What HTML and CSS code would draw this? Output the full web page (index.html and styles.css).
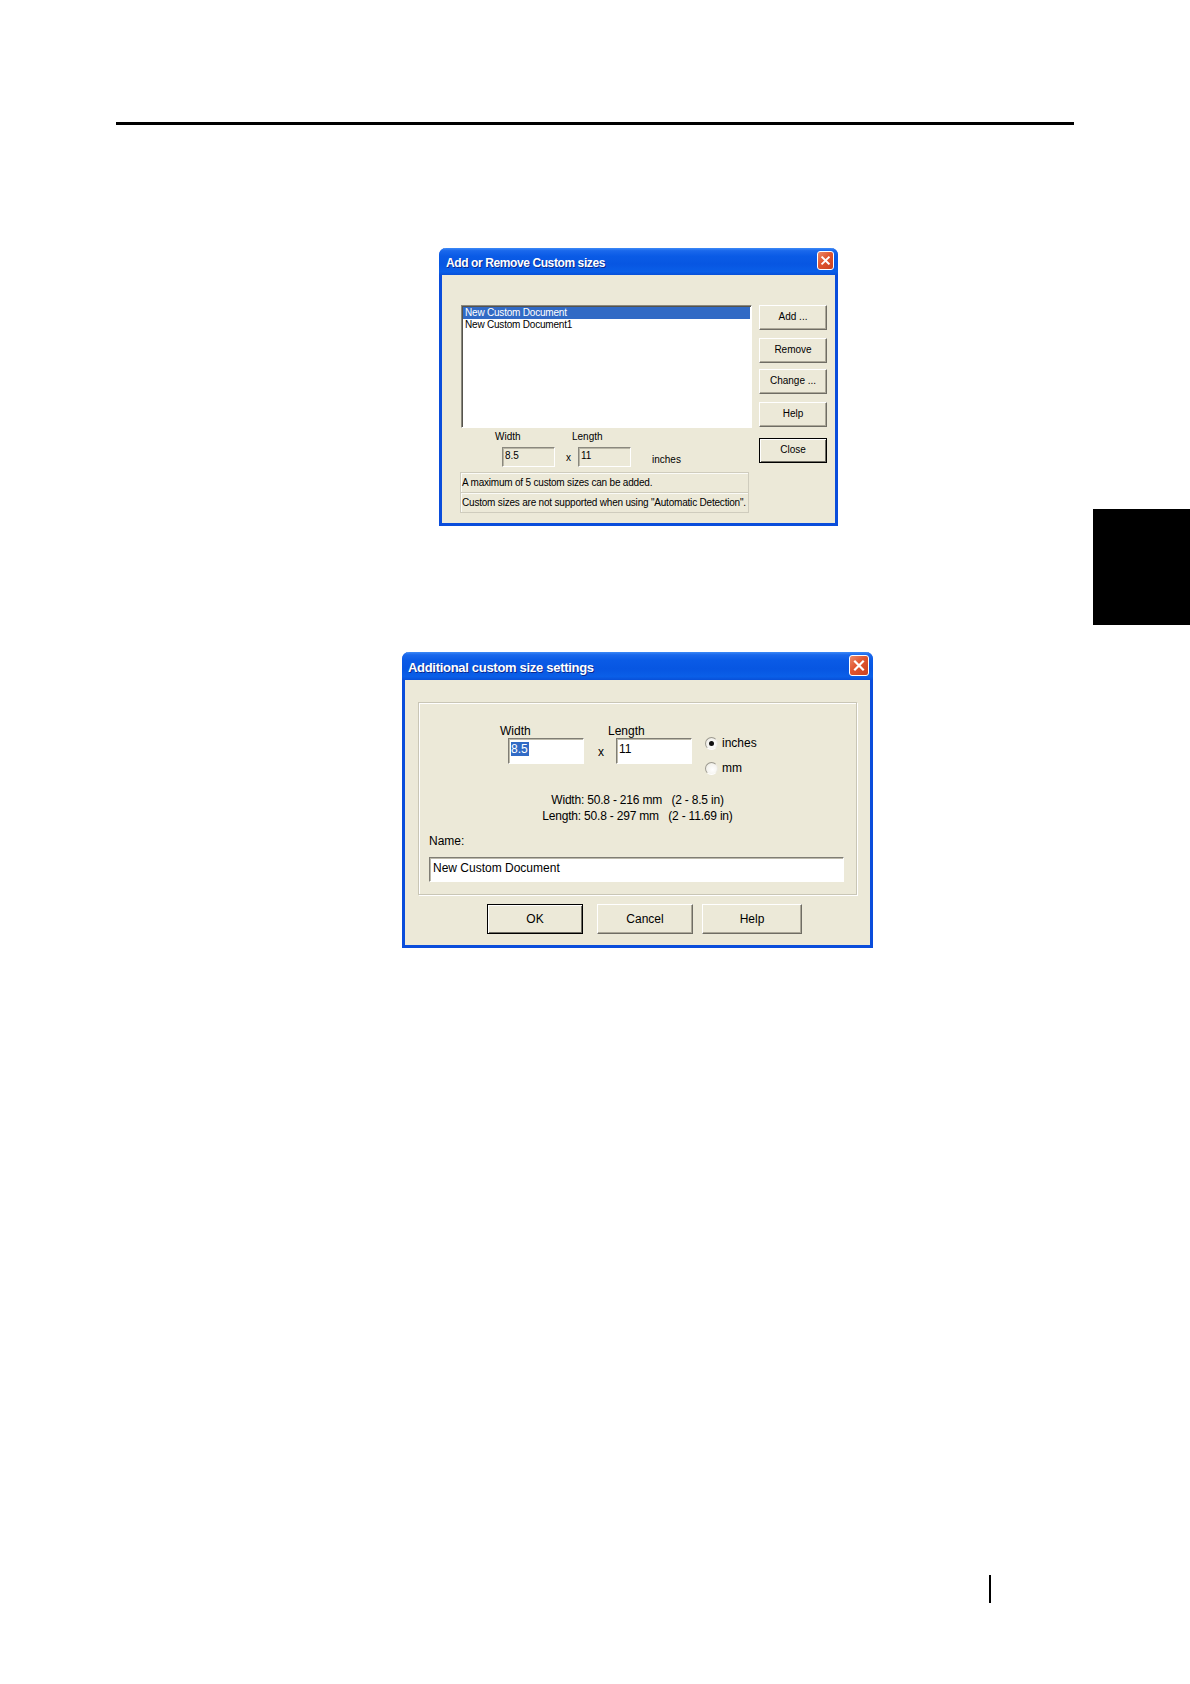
FILE: index.html
```html
<!DOCTYPE html>
<html>
<head>
<meta charset="utf-8">
<link rel="stylesheet" href="styles.css">
</head>
<body>
<div class="page">
  <div class="rule"></div>

  <div class="win d1">
    <div class="titlebar">
      <span class="title">Add or Remove Custom sizes</span>
      <span class="xbtn"><svg viewBox="0 0 16 16" width="100%" height="100%"><path d="M4.5 4.5 L11.5 11.5 M11.5 4.5 L4.5 11.5" stroke="#fff" stroke-width="2" stroke-linecap="square"/></svg></span>
    </div>
    <div class="body">
      <div class="leftcol">
        <div class="listbox">
          <div class="row sel">New Custom Document</div>
          <div class="row">New Custom Document1</div>
        </div>
        <div class="labels">
          <span class="lbl-w">Width</span><span class="lbl-l">Length</span>
        </div>
        <div class="inputs">
          <span class="field f-w">8.5</span>
          <span class="times">x</span>
          <span class="field f-l">11</span>
          <span class="unit">inches</span>
        </div>
        <div class="info first">A maximum of 5 custom sizes can be added.</div>
        <div class="info">Custom sizes are not supported when using "Automatic Detection".</div>
      </div>
      <div class="btncol">
        <div class="btn b-add">Add ...</div>
        <div class="btn b-rem">Remove</div>
        <div class="btn b-chg">Change ...</div>
        <div class="btn b-help">Help</div>
        <div class="btn b-close def">Close</div>
      </div>
    </div>
  </div>

  <div class="win d2">
    <div class="titlebar">
      <span class="title">Additional custom size settings</span>
      <span class="xbtn"><svg viewBox="0 0 16 16" width="100%" height="100%"><path d="M4.5 4.5 L11.5 11.5 M11.5 4.5 L4.5 11.5" stroke="#fff" stroke-width="2" stroke-linecap="square"/></svg></span>
    </div>
    <div class="body">
      <div class="group">
        <div class="toprow">
          <div class="fcol">
            <div class="flabel">Width</div>
            <div class="tinput"><span class="hl">8.5</span></div>
          </div>
          <div class="times2">x</div>
          <div class="fcol">
            <div class="flabel">Length</div>
            <div class="tinput">11</div>
          </div>
          <div class="radios">
            <div class="radio"><span class="circle on"></span><span>inches</span></div>
            <div class="radio"><span class="circle"></span><span>mm</span></div>
          </div>
        </div>
        <div class="ranges"><div class="rl">Width: 50.8 - 216 mm   (2 - 8.5 in)</div><div class="rl">Length: 50.8 - 297 mm   (2 - 11.69 in)</div></div>
        <div class="namelbl">Name:</div>
        <div class="nameinput">New Custom Document</div>
      </div>
      <div class="btnrow">
        <div class="btn2 ok def">OK</div>
        <div class="btn2 cancel">Cancel</div>
        <div class="btn2 help">Help</div>
      </div>
    </div>
  </div>

  <div class="folio"></div>
  <div class="thumbtab"></div>
</div>
</body>
</html>
```

FILE: styles.css
```css
html, body {
  margin: 0;
  padding: 0;
  background: #fff;
}
body {
  width: 1190px;
  height: 1684px;
  overflow: hidden;
  font-family: "Liberation Sans", Arial, sans-serif;
  color: #000;
}
.page {
  position: relative;
  width: 1190px;
  height: 1684px;
  padding-top: 122px;
  box-sizing: border-box;
}
.rule {
  margin-left: 116px;
  width: 958px;
  height: 3px;
  background: #000;
}

/* ---------- XP window ---------- */
.win {
  box-sizing: border-box;
  background: #ECE9D8;
  border: 3px solid #0A4DDB;
  border-top: none;
  border-radius: 7px 7px 0 0;
}
.titlebar {
  margin: 0 -3px;
  display: flex;
  align-items: center;
  justify-content: space-between;
  padding: 0 4px 0 7px;
  border-radius: 7px 7px 0 0;
  background: linear-gradient(to bottom, #3d8af7 0%, #1a68ec 10%, #0a5be6 30%, #0756e2 60%, #0a5fe8 88%, #0850d8 100%);
  box-sizing: border-box;
}
.title {
  color: #fff;
  font-weight: bold;
  text-shadow: 1px 1px 0 #0b2a8f;
  white-space: nowrap;
}
.xbtn {
  display: block;
  box-sizing: border-box;
  border: 1px solid #fff;
  border-radius: 3px;
  background: linear-gradient(135deg, #ec8a6a 0%, #e0552f 45%, #c94220 100%);
}

/* ---------- dialog 1 ---------- */
.d1 {
  margin-top: 123px;
  margin-left: 439px;
  width: 399px;
  height: 278px;
}
.d1 .titlebar {
  height: 27px;
}
.d1 .title {
  font-size: 12px;
  letter-spacing: -0.4px;
  padding-top: 2px;
}
.d1 .xbtn {
  width: 17px;
  height: 19px;
  margin-top: -3px;
}
.d1 .body {
  display: flex;
  gap: 7px;
  padding: 30px 8px 0 19px;
  font-size: 10px;
}
.leftcol {
  width: 291px;
}
.listbox {
  box-sizing: border-box;
  width: 291px;
  height: 123px;
  background: #fff;
  border: 1px solid;
  border-color: #8a887e #fff #fff #8a887e;
  box-shadow: inset 1px 1px 0 #55534c;
  padding: 1px 1px 0 1px;
}
.listbox .row {
  height: 12px;
  line-height: 12px;
  padding-left: 2px;
  white-space: nowrap;
  letter-spacing: -0.2px;
}
.listbox .row.sel {
  background: #316AC5;
  color: #fff;
}
.labels {
  display: flex;
  margin-top: 3px;
  height: 12px;
  line-height: 12px;
}
.lbl-w {
  margin-left: 34px;
  width: 77px;
}
.inputs {
  display: flex;
  margin-top: 4px;
  height: 20px;
}
.field {
  box-sizing: border-box;
  width: 53px;
  height: 20px;
  border: 1px solid;
  border-color: #8a887e #fff #fff #8a887e;
  box-shadow: inset 1px 1px 0 #b9b6a6;
  padding: 2px 0 0 2px;
  line-height: 12px;
}
.f-w {
  margin-left: 41px;
}
.times {
  margin-left: 11px;
  width: 12px;
  padding-top: 5px;
  line-height: 12px;
}
.unit {
  margin-left: 21px;
  padding-top: 7px;
  line-height: 12px;
}
.info {
  box-sizing: border-box;
  margin-left: -1px;
  width: 289px;
  height: 20px;
  line-height: 19px;
  border: 1px solid #cfccbd;
  border-top: none;
  box-shadow: inset 1px 1px 0 #fbfbf7;
  padding-left: 1px;
  white-space: nowrap;
  letter-spacing: -0.2px;
  overflow: hidden;
}
.info.first {
  margin-top: 5px;
  height: 21px;
  border-top: 1px solid #cfccbd;
}
.btncol {
  display: flex;
  flex-direction: column;
  width: 68px;
}
.btn {
  box-sizing: border-box;
  height: 25px;
  line-height: 22px;
  text-align: center;
  border: 1px solid;
  border-color: #fff #6f6d64 #6f6d64 #fff;
  box-shadow: inset -1px -1px 0 #aca899;
  background: #ECE9D8;
}
.b-rem { margin-top: 8px; }
.b-chg { margin-top: 6px; }
.b-help { margin-top: 8px; }
.b-close { margin-top: 11px; }
.btn.def {
  border: 1px solid #000;
  box-shadow: inset 1px 1px 0 #fff, inset -1px -1px 0 #6f6d64;
}

/* ---------- dialog 2 ---------- */
.d2 {
  margin-top: 126px;
  margin-left: 402px;
  width: 471px;
  height: 296px;
}
.d2 .titlebar {
  height: 28px;
  padding-left: 6px;
}
.d2 .title {
  font-size: 13px;
  letter-spacing: -0.3px;
  padding-top: 2px;
}
.d2 .xbtn {
  width: 20px;
  height: 21px;
  margin-top: -1px;
}
.d2 .body {
  padding: 22px 13px 0 13px;
  font-size: 12px;
}
.group {
  box-sizing: border-box;
  width: 439px;
  height: 193px;
  border: 1px solid #c9c6b6;
  box-shadow: inset 1px 1px 0 #fff, 1px 1px 0 #fff;
  padding: 21px 10px 0 10px;
}
.toprow {
  display: flex;
  margin-left: 71px;
}
.fcol {
  display: flex;
  flex-direction: column;
}
.flabel {
  height: 14px;
  line-height: 14px;
}
.tinput {
  box-sizing: border-box;
  margin-left: 8px;
  width: 76px;
  height: 26px;
  background: #fff;
  border: 1px solid;
  border-color: #7f7d74 #fff #fff #7f7d74;
  box-shadow: inset 1px 1px 0 #bdbaab;
  padding: 3px 0 0 2px;
  line-height: 14px;
}
.hl {
  background: #316AC5;
  color: #fff;
  padding: 0 1px 0 0;
}
.times2 {
  margin-top: 14px;
  margin-left: 14px;
  width: 10px;
  height: 26px;
  line-height: 28px;
}
.radios {
  margin-left: 13px;
  margin-top: 11px;
  display: flex;
  flex-direction: column;
  gap: 9px;
}
.radio {
  display: flex;
  align-items: center;
  height: 16px;
  line-height: 16px;
}
.circle {
  box-sizing: border-box;
  width: 13px;
  height: 13px;
  margin-right: 4px;
  border-radius: 50%;
  background: radial-gradient(circle at 60% 60%, #fff 0%, #f4f3ee 60%, #dcd9cc 100%);
  border: 1px solid;
  border-color: #9c9a90 #eceae2 #fff #9c9a90;
  position: relative;
}
.circle.on::after {
  content: "";
  position: absolute;
  left: 3px;
  top: 3px;
  width: 5px;
  height: 5px;
  border-radius: 50%;
  background: #111;
}
.ranges {
  margin-top: 16px;
  text-align: center;
  line-height: 16px;
  letter-spacing: -0.2px;
}
.rl {
  white-space: pre;
}
.namelbl {
  margin-top: 10px;
  height: 14px;
  line-height: 14px;
}
.nameinput {
  box-sizing: border-box;
  margin-top: 9px;
  width: 415px;
  height: 25px;
  background: #fff;
  border: 1px solid;
  border-color: #7f7d74 #fff #fff #7f7d74;
  box-shadow: inset 1px 1px 0 #bdbaab;
  padding: 2px 0 0 3px;
  line-height: 16px;
}
.btnrow {
  display: flex;
  margin-top: 9px;
  margin-left: 69px;
}
.btn2 {
  box-sizing: border-box;
  height: 30px;
  width: 96px;
  line-height: 28px;
  text-align: center;
  border: 1px solid;
  border-color: #fff #6f6d64 #6f6d64 #fff;
  box-shadow: inset -1px -1px 0 #aca899;
}
.btn2.def {
  border: 1px solid #000;
  box-shadow: inset 1px 1px 0 #fff, inset -1px -1px 0 #6f6d64;
}
.btn2.cancel { margin-left: 14px; }
.btn2.help { margin-left: 9px; width: 100px; }

/* ---------- page furniture ---------- */
.folio {
  margin-top: 627px;
  margin-left: 989px;
  width: 2px;
  height: 28px;
  background: #000;
}
.thumbtab {
  position: absolute;
  right: 0;
  top: 509px;
  width: 97px;
  height: 116px;
  background: #000;
}
```
